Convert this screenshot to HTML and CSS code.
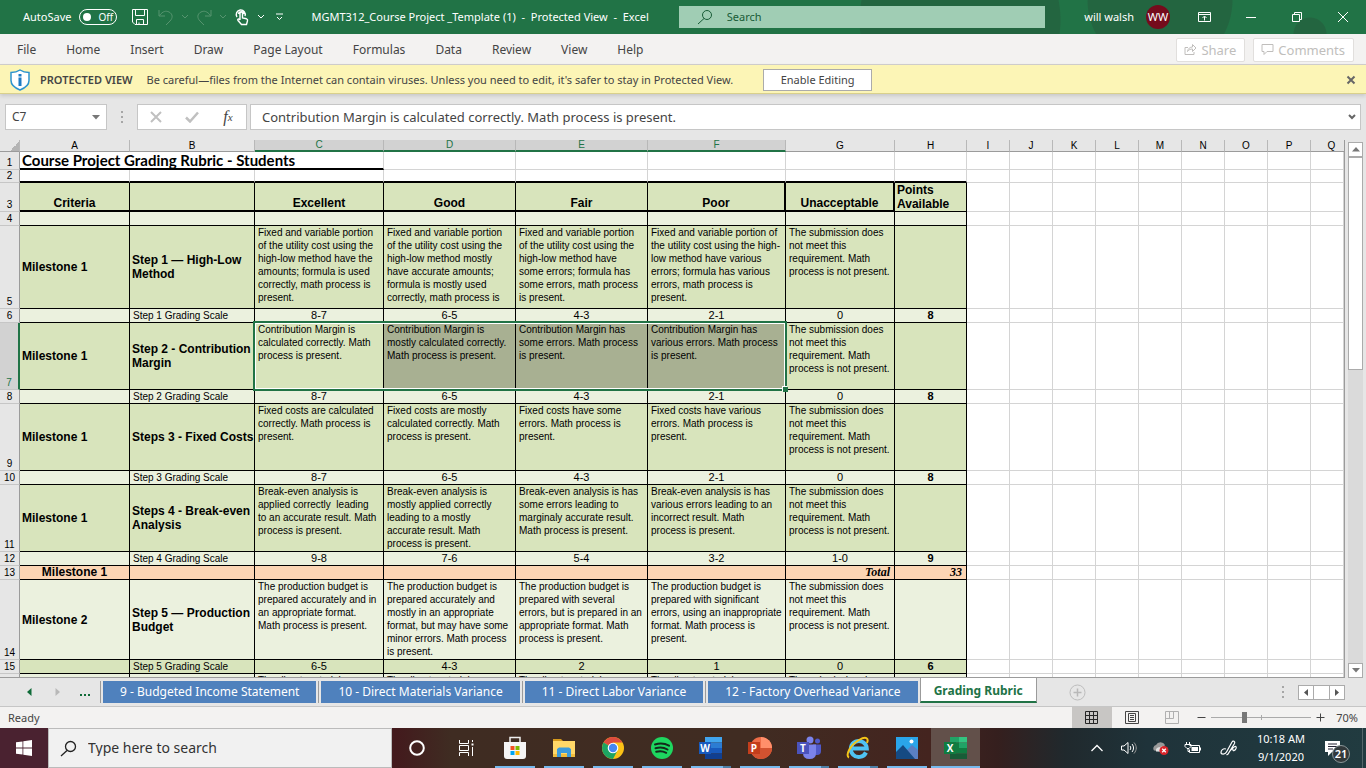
FILE: index.html
```html
<!DOCTYPE html>
<html lang="en">
<head>
  <meta charset="utf-8">
  <title>MGMT312_Course Project _Template (1) - Excel</title>
  <link rel="stylesheet" href="styles.css">
</head>
<body>
<header class="titlebar">
  <label class="autosave">AutoSave <input type="checkbox" class="switch"></label>
  <div class="qat">
    <button class="qat-btn" aria-label="Save"><svg width="18" height="18" viewBox="0 0 18 18"><path d="M1.5 1.5h15v15H4l-2.500-2.500zM4.500 1.500v6h9v-6M5.500 16.500v-5h7v5M8 16.500v-2" /></svg></button>
    <button class="qat-btn dim" aria-label="Undo"><svg width="18" height="18" viewBox="0 0 18 18"><path d="M2 2v6h6M2.500 7.500C6 3 9 2.500 12 4c4 2 4 6 1 9l-4 4" /></svg></button>
    <button class="caret dim" aria-label="Undo list"><svg width="8" height="6" viewBox="0 0 8 6"><path d="M1 1l3 3 3-3" /></svg></button>
    <button class="qat-btn dim" aria-label="Redo"><svg width="18" height="18" viewBox="0 0 18 18"><path d="M16 2v6h-6M15.500 7.500C12 3 9 2.500 6 4c-4 2-4 6-1 9l4 4" /></svg></button>
    <button class="caret dim" aria-label="Redo list"><svg width="8" height="6" viewBox="0 0 8 6"><path d="M1 1l3 3 3-3" /></svg></button>
    <button class="qat-btn" aria-label="Touch mode"><svg class="touch" width="16" height="18" viewBox="0 0 16 18"><path d="M3 9a4.500 4.500 0 1 1 8-1M6 12V5.500c0-2 2.500-2 2.500 0V10l4 .8c1 .3 1.300 1 1 2L12.500 16.500H7.500L4 12.500c-.8-1.200.6-2 1.500-1.200L6 12M4.500 6a2.800 2.800 0 0 1 5.500 0" /></svg></button>
    <button class="caret" aria-label="Touch mode list"><svg width="8" height="6" viewBox="0 0 8 6"><path d="M1 1l3 3 3-3" /></svg></button>
    <button class="qat-btn" aria-label="Customize toolbar"><svg width="10" height="8" viewBox="0 0 10 8"><path d="M1 1h7M2 4l2.500 2.500L7 4" /></svg></button>
  </div>
  <h1 class="doc-title">MGMT312_Course Project _Template (1)&nbsp; -&nbsp; Protected View&nbsp; -&nbsp; Excel</h1>
  <label class="search">
    <svg width="16" height="16" viewBox="0 0 16 16"><circle cx="10" cy="6" r="4.500" /><path d="M7 9.500L1 15" /></svg>
    <input type="text" placeholder="Search" aria-label="Search">
  </label>
  <div class="account">
    <span>will walsh</span>
    <span class="avatar">WW</span>
  </div>
  <div class="window-btns">
    <button aria-label="Ribbon display options"><svg width="14" height="12" viewBox="0 0 14 12"><path d="M.5 1.500h12v9H.5zM.5 3.500h12M6.500 9.500v-4M4.500 7l2-2 2 2" /></svg></button>
    <button aria-label="Minimize"><svg width="12" height="12" viewBox="0 0 12 12"><path d="M1 6.500h10" /></svg></button>
    <button aria-label="Restore"><svg width="12" height="12" viewBox="0 0 12 12"><path d="M1.500 3.500h7v7h-7zM3.500 3.500v-2h7v7h-2" /></svg></button>
    <button aria-label="Close"><svg width="12" height="12" viewBox="0 0 12 12"><path d="M1 1l10 10M11 1L1 11" /></svg></button>
  </div>
</header>

<nav class="ribbon">
  <a href="#">File</a>
  <a href="#">Home</a>
  <a href="#">Insert</a>
  <a href="#">Draw</a>
  <a href="#">Page Layout</a>
  <a href="#">Formulas</a>
  <a href="#">Data</a>
  <a href="#">Review</a>
  <a href="#">View</a>
  <a href="#">Help</a>
  <div class="ribbon-right">
    <button disabled><svg width="13" height="13" viewBox="0 0 13 13"><path d="M4 4.500H1v7h9V9M3.500 8.500c.5-3 2.500-4.500 5-4.500V1.500l3.500 3.500-3.500 3.500V6c-2 0-3.500.5-5 2.500z" /></svg>Share</button>
    <button disabled><svg width="13" height="13" viewBox="0 0 13 13"><path d="M1 1.500h11v7H6l-3 3v-3H1z" /></svg>Comments</button>
  </div>
</nav>

<div class="msgbar">
  <svg class="shield" width="20" height="22" viewBox="0 0 20 22"><path d="M10 1c3 2 6 2.500 9 2.500v8c0 5-4 7.500-9 9.500-5-2-9-4.500-9-9.500v-8C4 3.500 7 3 10 1z" fill="#fff" stroke="#2b93cf" stroke-width="1.500" /><path d="M8.500 5h3v2.500h-3zM8.500 8.500h3V17h-3z" fill="#1e7cc4" /></svg>
  <b>PROTECTED VIEW</b>
  <span class="msg">Be careful—files from the Internet can contain viruses. Unless you need to edit, it's safer to stay in Protected View.</span>
  <button class="enable">Enable Editing</button>
  <button class="msg-close" aria-label="Close message"><svg width="10" height="10" viewBox="0 0 10 10"><path d="M1.500 1.500l7 7M8.500 1.500l-7 7" /></svg></button>
</div>

<div class="formulabar">
  <div class="namebox">
    <input type="text" value="C7" aria-label="Name box">
    <button aria-label="Cell names"><svg width="8" height="5" viewBox="0 0 8 5"><path d="M0 0h8L4 4.500z" fill="#777" /></svg></button>
  </div>
  <span class="grip"></span>
  <div class="fx-btns">
    <button aria-label="Cancel"><svg width="12" height="12" viewBox="0 0 12 12"><path d="M1 1l10 10M11 1L1 11" stroke="#c0c0c0" stroke-width="2" fill="none" /></svg></button>
    <button aria-label="Enter"><svg width="14" height="12" viewBox="0 0 14 12"><path d="M1 6.500L5 10.500 13 1.500" stroke="#c0c0c0" stroke-width="2.500" fill="none" /></svg></button>
    <button class="fx" aria-label="Insert function"><i>f</i><small>x</small></button>
  </div>
  <div class="formula">
    <input type="text" value="Contribution Margin is calculated correctly. Math process is present." aria-label="Formula bar">
    <button aria-label="Expand"><svg width="8" height="6" viewBox="0 0 8 6"><path d="M1 1l3 3 3-3" stroke="#666" stroke-width="2" fill="none" /></svg></button>
  </div>
</div>

<main class="workbook">
  <div class="sheet">
    <table>
      <colgroup>
        <col class="c-num"><col class="c-a"><col class="c-b"><col class="c-c"><col class="c-d"><col class="c-d"><col class="c-f"><col class="c-g"><col class="c-h">
        <col class="c-std" span="8"><col>
      </colgroup>
      <thead>
        <tr>
          <th class="corner"></th><th>A</th><th>B</th><th class="on">C</th><th class="on">D</th><th class="on">E</th><th class="on">F</th><th>G</th><th>H</th>
          <th>I</th><th>J</th><th>K</th><th>L</th><th>M</th><th>N</th><th>O</th><th>P</th><th class="last">Q</th>
        </tr>
      </thead>
      <tbody>
        <tr class="h18">
          <th>1</th><td class="title" colspan="3">Course Project Grading Rubric - Students</td>
          <td></td><td></td><td></td><td></td><td></td><td></td><td></td><td></td><td></td><td></td><td></td><td></td><td></td><td></td>
        </tr>
        <tr class="h13 over">
          <th>2</th><td></td><td></td><td></td><td></td><td></td><td></td><td></td><td></td>
          <td></td><td></td><td></td><td></td><td></td><td></td><td></td><td></td><td></td>
        </tr>
        <tr class="h29 heads green">
          <th>3</th><td>Criteria</td><td></td><td>Excellent</td><td>Good</td><td>Fair</td><td class="thick">Poor</td><td class="thick">Unacceptable</td><td class="points">Points<br>Available</td>
          <td></td><td></td><td></td><td></td><td></td><td></td><td></td><td></td><td></td>
        </tr>
        <tr class="h14 pale">
          <th>4</th><td></td><td></td><td></td><td></td><td></td><td></td><td></td><td></td>
          <td></td><td></td><td></td><td></td><td></td><td></td><td></td><td></td><td></td>
        </tr>
        <tr class="h83 green step">
          <th>5</th><td>Milestone 1</td><td>Step 1 — High-Low<br>Method</td>
          <td>Fixed and variable portion<br>of the utility cost using the<br>high-low method have the<br>amounts; formula is used<br>correctly, math process is<br>present.</td>
          <td>Fixed and variable portion<br>of the utility cost using the<br>high-low method mostly<br>have accurate amounts;<br>formula is mostly used<br>correctly, math process is</td>
          <td>Fixed and variable portion<br>of the utility cost using the<br>high-low method have<br>some errors; formula has<br>some errors, math process<br>is present.</td>
          <td>Fixed and variable portion of<br>the utility cost using the high-<br>low method have various<br>errors; formula has various<br>errors, math process is<br>present.</td>
          <td>The submission does<br>not meet this<br>requirement. Math<br>process is not present.</td>
          <td></td>
          <td></td><td></td><td></td><td></td><td></td><td></td><td></td><td></td><td></td>
        </tr>
        <tr class="h14 pale scale">
          <th>6</th><td></td><td>Step 1 Grading Scale</td><td>8-7</td><td>6-5</td><td>4-3</td><td>2-1</td><td>0</td><td>8</td>
          <td></td><td></td><td></td><td></td><td></td><td></td><td></td><td></td><td></td>
        </tr>
        <tr class="h67 green step">
          <th class="on">7</th><td>Milestone 1</td><td>Step 2 - Contribution<br>Margin</td>
          <td class="active">Contribution Margin is<br>calculated correctly. Math<br>process is present.<div class="selection"></div></td>
          <td class="picked">Contribution Margin is<br>mostly calculated correctly.<br>Math process is present.</td>
          <td class="picked">Contribution Margin has<br>some errors. Math process<br>is present.</td>
          <td class="picked">Contribution Margin has<br>various errors. Math process<br>is present.</td>
          <td>The submission does<br>not meet this<br>requirement. Math<br>process is not present.</td>
          <td></td>
          <td></td><td></td><td></td><td></td><td></td><td></td><td></td><td></td><td></td>
        </tr>
        <tr class="h14 pale scale">
          <th>8</th><td></td><td>Step 2 Grading Scale</td><td>8-7</td><td>6-5</td><td>4-3</td><td>2-1</td><td>0</td><td>8</td>
          <td></td><td></td><td></td><td></td><td></td><td></td><td></td><td></td><td></td>
        </tr>
        <tr class="h67 green step">
          <th>9</th><td>Milestone 1</td><td>Steps 3 - Fixed Costs</td>
          <td>Fixed costs are calculated<br>correctly. Math process is<br>present.</td>
          <td>Fixed costs are mostly<br>calculated correctly. Math<br>process is present.</td>
          <td>Fixed costs have some<br>errors. Math process is<br>present.</td>
          <td>Fixed costs have various<br>errors. Math process is<br>present.</td>
          <td>The submission does<br>not meet this<br>requirement. Math<br>process is not present.</td>
          <td></td>
          <td></td><td></td><td></td><td></td><td></td><td></td><td></td><td></td><td></td>
        </tr>
        <tr class="h14 pale scale">
          <th>10</th><td></td><td>Step 3 Grading Scale</td><td>8-7</td><td>6-5</td><td>4-3</td><td>2-1</td><td>0</td><td>8</td>
          <td></td><td></td><td></td><td></td><td></td><td></td><td></td><td></td><td></td>
        </tr>
        <tr class="h67 green step">
          <th>11</th><td>Milestone 1</td><td>Steps 4 - Break-even<br>Analysis</td>
          <td>Break-even analysis is<br>applied correctly&nbsp; leading<br>to an accurate result. Math<br>process is present.</td>
          <td>Break-even analysis is<br>mostly applied correctly<br>leading to a mostly<br>accurate result. Math<br>process is present.</td>
          <td>Break-even analysis is has<br>some errors leading to<br>marginaly accurate result.<br>Math process is present.</td>
          <td>Break-even analysis is has<br>various errors leading to an<br>incorrect result. Math<br>process is present.</td>
          <td>The submission does<br>not meet this<br>requirement. Math<br>process is not present.</td>
          <td></td>
          <td></td><td></td><td></td><td></td><td></td><td></td><td></td><td></td><td></td>
        </tr>
        <tr class="h14 pale scale">
          <th>12</th><td></td><td>Step 4 Grading Scale</td><td>9-8</td><td>7-6</td><td>5-4</td><td>3-2</td><td>1-0</td><td>9</td>
          <td></td><td></td><td></td><td></td><td></td><td></td><td></td><td></td><td></td>
        </tr>
        <tr class="h14 total">
          <th>13</th><td>Milestone 1</td><td></td><td></td><td></td><td></td><td></td><td class="sum">Total</td><td class="sum">33</td>
          <td></td><td></td><td></td><td></td><td></td><td></td><td></td><td></td><td></td>
        </tr>
        <tr class="h80 pale step">
          <th>14</th><td>Milestone 2</td><td>Step 5 — Production<br>Budget</td>
          <td>The production budget is<br>prepared accurately and in<br>an appropriate format.<br>Math process is present.</td>
          <td>The production budget is<br>prepared accurately and<br>mostly in an appropriate<br>format, but may have some<br>minor errors. Math process<br>is present.</td>
          <td>The production budget is<br>prepared with several<br>errors, but is prepared in an<br>appropriate format. Math<br>process is present.</td>
          <td>The production budget is<br>prepared with significant<br>errors, using an inappropriate<br>format. Math process is<br>present.</td>
          <td>The submission does<br>not meet this<br>requirement. Math<br>process is not present.</td>
          <td></td>
          <td></td><td></td><td></td><td></td><td></td><td></td><td></td><td></td><td></td>
        </tr>
        <tr class="h14 green scale">
          <th>15</th><td></td><td>Step 5 Grading Scale</td><td>6-5</td><td>4-3</td><td>2</td><td>1</td><td>0</td><td>6</td>
          <td></td><td></td><td></td><td></td><td></td><td></td><td></td><td></td><td></td>
        </tr>
        <tr class="h67 pale step">
          <th></th><td></td><td></td><td>The direct material</td><td>The direct material</td><td>The direct material</td><td>The direct material</td><td>The submission does</td><td></td>
          <td></td><td></td><td></td><td></td><td></td><td></td><td></td><td></td><td></td>
        </tr>
      </tbody>
    </table>
  </div>
  <div class="vscroll">
    <button aria-label="Scroll up"><svg width="8" height="5" viewBox="0 0 8 5"><path d="M0 4.500h8L4 0z" fill="#777" /></svg></button>
    <div class="vtrack"><div class="vthumb"></div></div>
    <button aria-label="Scroll down"><svg width="8" height="5" viewBox="0 0 8 5"><path d="M0 0h8L4 4.500z" fill="#777" /></svg></button>
  </div>
</main>

<div class="tabbar">
  <div class="tab-nav">
    <button aria-label="Previous sheet"><svg width="5" height="8" viewBox="0 0 5 8"><path d="M4.500 0v8L0 4z" fill="#0f6b38" /></svg></button>
    <button aria-label="Next sheet"><svg width="5" height="8" viewBox="0 0 5 8"><path d="M.5 0v8L5 4z" fill="#b8b8b8" /></svg></button>
    <button class="more" aria-label="More sheets"><svg width="12" height="12" viewBox="0 0 12 12"><path d="M1 8h2v2H1zM5 8h2v2H5zM9 8h2v2H9z" fill="#0f6b38" /></svg></button>
  </div>
  <button class="tab">9 - Budgeted Income Statement</button>
  <button class="tab">10 - Direct Materials Variance</button>
  <button class="tab">11 - Direct Labor Variance</button>
  <button class="tab">12 - Factory Overhead Variance</button>
  <button class="tab current">Grading Rubric</button>
  <button class="add-sheet" aria-label="New sheet"><svg width="17" height="17" viewBox="0 0 17 17"><path d="M8.500 4.500v8M4.500 8.500h8" stroke="#b8b8b8" stroke-width="1.500" /><circle cx="8.500" cy="8.500" r="7.500" fill="none" stroke="#bdbdbd" /></svg></button>
  <span class="grip"></span>
  <div class="hscroll">
    <button aria-label="Scroll left"><svg width="4" height="7" viewBox="0 0 4 7"><path d="M4 0v7L0 3.500z" fill="#555" /></svg></button>
    <div></div>
    <button aria-label="Scroll right"><svg width="4" height="7" viewBox="0 0 4 7"><path d="M0 0v7l4-3.500z" fill="#555" /></svg></button>
  </div>
</div>

<div class="statusbar">
  <span class="ready">Ready</span>
  <button class="view on" aria-label="Normal"><svg width="14" height="14" viewBox="0 0 14 14"><path d="M.5.5h12v12H.5zM4.500.5v12M8.500.5v12M.5 4.500h12M.5 8.500h12" stroke="#262626" fill="none" /></svg></button>
  <button class="view" aria-label="Page layout"><svg width="14" height="14" viewBox="0 0 14 14"><path d="M.5.5h13v12H.5zM3.500 2.500h7v8h-7zM5 4.500h4M5 6.500h4M5 8.500h4" stroke="#444" fill="none" /></svg></button>
  <button class="view" aria-label="Page break preview"><svg width="14" height="14" viewBox="0 0 14 14"><path d="M.5.5h13v12H.5zM.5 7.500h8v-7M4.500.5v7" stroke="#b0b0b0" fill="none" /></svg></button>
  <button class="zoom-btn" aria-label="Zoom out"><svg width="9" height="9" viewBox="0 0 9 9"><path d="M.5 4.500h8" stroke="#444" /></svg></button>
  <input type="range" class="zoom" min="0" max="100" value="33" aria-label="Zoom">
  <button class="zoom-btn" aria-label="Zoom in"><svg width="9" height="9" viewBox="0 0 9 9"><path d="M.5 4.500h8M4.500.5v8" stroke="#444" /></svg></button>
  <span class="zoom-value">70%</span>
</div>

<footer class="taskbar">
  <button class="start" aria-label="Start"><svg width="16" height="16" viewBox="0 0 16 16"><path d="M0 2.300L6.500 1.400v6.200H0zM7.300 1.300L16 0v7.600H7.300zM0 8.400h6.500v6.200L0 13.700zM7.300 8.400H16V16l-8.700-1.300z" fill="#fff" /></svg></button>
  <label class="task-search">
    <svg width="17" height="17" viewBox="0 0 17 17"><circle cx="10.500" cy="6.500" r="5" fill="none" stroke="#222" stroke-width="1.300" /><path d="M7 10.500L1 16" stroke="#222" stroke-width="1.300" /></svg>
    <input type="text" placeholder="Type here to search" aria-label="Type here to search">
  </label>
  <div class="apps">
    <button class="app" aria-label="Cortana"><svg width="18" height="18" viewBox="0 0 18 18"><circle cx="9" cy="9" r="6.800" fill="none" stroke="#fff" stroke-width="2" /></svg></button>
    <button class="app" aria-label="Task view"><svg width="18" height="18" viewBox="0 0 18 18"><path d="M2.500 1v3.500h9V1M2.500 17v-3.500h9V17M2.500 6.500h9v5h-9zM15.500 1v2M15.500 8v9" stroke="#fff" fill="none" /><path d="M14.500 4.500h2v2h-2z" fill="#fff" /></svg></button>
    <button class="app open" aria-label="Store"><svg width="24" height="24" viewBox="0 0 24 24"><path d="M7 8V1.500h10V8" fill="none" stroke="#eee" stroke-width="1.500" /><path d="M1 6h22v14q0 3-3 3H4q-3 0-3-3z" fill="#f5f5f5" /><path d="M7.500 10h4v4h-4z" fill="#f25022" /><path d="M12.500 10h4v4h-4z" fill="#7fba00" /><path d="M7.500 15h4v4h-4z" fill="#00a4ef" /><path d="M12.500 15h4v4h-4z" fill="#ffb900" /></svg></button>
    <button class="app open" aria-label="File Explorer"><svg width="24" height="24" viewBox="0 0 24 24"><path d="M1 3h8l2 2H1z" fill="#d69a1c" /><path d="M1 5h22v16H1z" fill="#ffd869" /><path d="M1 18h22v3H1z" fill="#f0bd3e" /><path d="M5 21v-8l2-1.500h10l2 1.500v8h-4v-4H9v4z" fill="#3c9bdc" /></svg></button>
    <button class="app open" aria-label="Chrome"><svg width="24" height="24" viewBox="0 0 24 24"><circle cx="12" cy="12" r="11" fill="#fbc116" /><path d="M12 12L2.500 6.500A11 11 0 0 1 21.500 6.500H12z" fill="#dd4b3e" /><path d="M2.500 6.500A11 11 0 0 0 12 23l4.500-8.500L12 12z" fill="#1da462" /><circle cx="12" cy="12" r="5.300" fill="#fff" /><circle cx="12" cy="12" r="4.200" fill="#4587f3" /></svg></button>
    <button class="app open" aria-label="Spotify"><svg width="24" height="24" viewBox="0 0 24 24"><circle cx="12" cy="12" r="11" fill="#1ed760" /><path d="M5 8.500c5-1.500 10-1 14 1.200M5.500 12.300c4.300-1.200 8.500-.8 12 1.200M6.200 15.800c3.700-1 7-.6 10 1" fill="none" stroke="#132b1b" stroke-width="2" stroke-linecap="round" /></svg></button>
    <button class="app open stack" aria-label="Word"><svg width="24" height="24" viewBox="0 0 24 24"><path d="M6 1h17v5.500H6z" fill="#41a5ee" /><path d="M6 6.500h17V12H6z" fill="#2b7cd3" /><path d="M6 12h17v5.500H6z" fill="#185abd" /><path d="M6 17.500h17V23H6z" fill="#103f91" /><path d="M0 6h12v12H0z" fill="#185abd" /><text x="6" y="15.500" class="letter">W</text></svg></button>
    <button class="app open" aria-label="PowerPoint"><svg width="24" height="24" viewBox="0 0 24 24"><circle cx="13" cy="12" r="11" fill="#ed6c47" /><path d="M13 1a11 11 0 0 1 11 11H13z" fill="#ff8f6b" /><path d="M2 12h22a11 11 0 0 1-22 0z" fill="#d35230" /><path d="M0 6h12v12H0z" fill="#c43e1c" /><text x="6" y="15.500" class="letter">P</text></svg></button>
    <button class="app open stack" aria-label="Teams"><svg width="24" height="24" viewBox="0 0 24 24"><circle cx="13" cy="4" r="3.500" fill="#7b83eb" /><circle cx="20.500" cy="5" r="2.500" fill="#5059c9" /><path d="M16 8.500h8V15q0 4-4 4h-4z" fill="#5059c9" /><path d="M6 8.500h13V17q0 6-6.500 6T6 17z" fill="#7b83eb" /><path d="M0 6h12v12H0z" fill="#4b53bc" /><text x="6" y="15.500" class="letter">T</text></svg></button>
    <button class="app open stack" aria-label="Internet Explorer"><svg width="24" height="24" viewBox="0 0 24 24"><path d="M20 16.500a8 8 0 1 1 .8-4H7" fill="none" stroke="#4fc3f3" stroke-width="4" /><path d="M3 21.500C-1 20 4 9 13 4c7-4 10-2 8 3" fill="none" stroke="#f5c518" stroke-width="2" /></svg></button>
    <button class="app open" aria-label="Photos"><svg width="24" height="24" viewBox="0 0 24 24"><path d="M1 1h22v22H1z" fill="#2aa5ea" /><path d="M11 15l6-6 6 5v9h-9z" fill="#5b7fc2" /><path d="M1 16l7-7 12 14H1z" fill="#154a83" /><circle cx="16.500" cy="5.500" r="2" fill="#fff" /></svg></button>
    <button class="app open focus" aria-label="Excel"><svg width="24" height="24" viewBox="0 0 24 24"><path d="M6 1h9v5.500H6z" fill="#21a366" /><path d="M15 1h8v5.500h-8z" fill="#33c481" /><path d="M6 6.500h9V12H6z" fill="#107c41" /><path d="M15 6.500h8V12h-8z" fill="#21a366" /><path d="M6 12h17v5.500H6z" fill="#107c41" /><path d="M6 17.500h17V23H6z" fill="#185c37" /><path d="M0 6h12v12H0z" fill="#107c41" /><text x="6" y="15.500" class="letter">X</text></svg></button>
  </div>
  <div class="tray">
    <button aria-label="Hidden icons"><svg width="14" height="14" viewBox="0 0 14 14"><path d="M1.500 10L7 4.500l5.500 5.500" stroke="#fff" stroke-width="1.300" fill="none" /></svg></button>
    <button aria-label="Volume"><svg width="18" height="14" viewBox="0 0 18 14"><path d="M1.500 5v4H4l4 3.500v-11L4 5zM10 5c1 1.200 1 2.800 0 4M12 3c2 2.500 2 5.500 0 8" stroke="#fff" fill="none" /><path d="M14 1.500c3 3.500 3 7.500 0 11" stroke="#999" fill="none" /></svg></button>
    <button aria-label="OneDrive"><svg width="18" height="14" viewBox="0 0 18 14"><path d="M2 9.500a3.500 3.500 0 0 1 2-5.500 5 5 0 0 1 9 0l-4 6z" fill="#999" /><path d="M4 10.500q-1-4 4-4.500 5-2 7 2v3z" fill="#e0e0e0" /><circle cx="12" cy="9.500" r="4.500" fill="#d9252b" /><path d="M10.200 7.700l3.600 3.600M13.800 7.700l-3.600 3.600" stroke="#fff" stroke-width="1.300" /></svg></button>
    <button aria-label="Battery"><svg width="18" height="14" viewBox="0 0 18 14"><path d="M5.500 4.500h10v7h-10v-3M16.500 6.500v3" stroke="#fff" fill="none" /><path d="M7.500 6h6.500v4H7.500z" fill="#fff" /><path d="M2.500 1v3M5.500 1v3M1 3.500h6v2L5 7.500H3L1 5.500zM4 7v3.500h2" stroke="#fff" fill="none" /></svg></button>
    <button class="pen" aria-label="Windows Ink"><svg width="18" height="16" viewBox="0 0 18 16"><path d="M6 9c-3-1-5 1.500-5 3.500S5 15 6.500 12L12 2c1-2 3.500-.5 2.500 1.500L8 14l-1.500 1M10 11c4-5 7-6 6-2.500-.7 2-3 3-3 1.500s-1-2-1-2" stroke="#fff" stroke-width="1.200" fill="none" /></svg></button>
    <div class="clock">10:18 AM<br>9/1/2020</div>
    <button class="notify" aria-label="Notifications"><svg width="18" height="17" viewBox="0 0 18 17"><path d="M1 1h15v11H8l-4 4v-4H1z" fill="#fff" /><path d="M4 4h9M4 6.500h9M4 9h5" stroke="#223" /></svg><span class="badge">21</span></button>
  </div>
</footer>
</body>
</html>
```
FILE: styles.css
```css
* {
  box-sizing: border-box;
}
html,
body {
  height: 100%;
}
body {
  margin: 0;
  display: flex;
  flex-direction: column;
  overflow: hidden;
  background: #e6e6e6;
  color: #444;
  font: 12px/16px "Noto Sans", "Open Sans", sans-serif;
}
button,
input {
  margin: 0;
  padding: 0;
  border: 0;
  background: none;
  color: inherit;
  font: inherit;
}
button {
  display: flex;
  align-items: center;
  justify-content: center;
}
svg {
  display: block;
  flex: none;
}

/* title bar */
.titlebar {
  display: flex;
  align-items: center;
  flex: none;
  height: 34px;
  padding-left: 23px;
  background:
    radial-gradient(circle at 1310px 34px, #236540 16px, transparent 17px),
    radial-gradient(circle at 1290px 20px, #217346 34px, transparent 35px),
    radial-gradient(circle at 1160px 0, #236540 72px, transparent 73px),
    radial-gradient(circle at 960px 20px, #236540 100px, transparent 101px),
    #217346;
  color: #fff;
  font-size: 11px;
}
.titlebar svg {
  fill: none;
  stroke: currentColor;
}
.titlebar .touch {
  stroke-width: 1.4;
}
.autosave {
  display: flex;
  align-items: center;
  gap: 8px;
}
.switch {
  appearance: none;
  display: flex;
  align-items: center;
  width: 38px;
  height: 16px;
  border: 1px solid #fff;
  border-radius: 8px;
}
.switch::before {
  content: "";
  width: 8px;
  height: 8px;
  margin: 0 7px 0 3px;
  border-radius: 50%;
  background: #fff;
}
.switch::after {
  content: "Off";
  font-size: 10px;
}
.qat {
  display: flex;
  align-items: center;
  padding-left: 10px;
}
.qat-btn {
  width: 26px;
  height: 30px;
}
.caret {
  width: 12px;
  height: 30px;
}
.dim {
  color: #56946f;
}
.doc-title {
  margin: 0 30px 0 18px;
  font-size: 11px;
  font-weight: 400;
  white-space: nowrap;
}
.search {
  display: flex;
  align-items: center;
  flex: 0 1 366px;
  gap: 14px;
  height: 22px;
  padding-left: 18px;
  background: #a0cdb4;
  color: #185c37;
}
.search input {
  min-width: 0;
}
.search input::placeholder {
  color: #185c37;
}
.account {
  display: flex;
  align-items: center;
  gap: 12px;
  margin-left: auto;
}
.avatar {
  width: 24px;
  height: 24px;
  border-radius: 50%;
  background: #750b1c;
  line-height: 24px;
  text-align: center;
}
.window-btns {
  display: flex;
  margin-left: 12px;
}
.window-btns button {
  width: 46px;
  height: 32px;
}

/* ribbon tabs */
.ribbon {
  display: flex;
  align-items: center;
  flex: none;
  gap: 30px;
  height: 31px;
  padding: 1px 12px 0 17px;
  border-bottom: 1px solid #cfcdcb;
  background: #f3f2f1;
}
.ribbon a {
  color: #444;
  text-decoration: none;
}
.ribbon-right {
  display: flex;
  gap: 8px;
  margin-left: auto;
}
.ribbon-right button {
  gap: 4px;
  height: 24px;
  padding: 0 8px 0 7px;
  border: 1px solid #e1dfdd;
  border-radius: 2px;
  background: #fff;
  color: #c0bebc;
  font-size: 13px;
}
.ribbon-right svg {
  fill: none;
  stroke: currentColor;
}

/* protected view bar */
.msgbar {
  display: flex;
  align-items: center;
  flex: none;
  gap: 10px;
  height: 29px;
  padding: 1px 10px 0;
  border-bottom: 1px solid #d9d08c;
  background: #fcf5b6;
  box-shadow: 0 2px 4px #c8c8c8;
  font-size: 11px;
}
.msgbar b {
  font-weight: 600;
}
.msg {
  padding: 0 10px 0 4px;
}
.enable {
  width: 109px;
  height: 22px;
  margin-left: 10px;
  border: 1px solid #ababab;
  background: #fff;
}
.msg-close {
  margin-left: auto;
}
.msg-close svg {
  stroke: #666;
  stroke-width: 2;
}

/* formula bar */
.formulabar {
  display: flex;
  align-items: center;
  flex: none;
  height: 46px;
  padding: 0 5px;
}
.namebox,
.fx-btns,
.formula {
  display: flex;
  height: 26px;
  border: 1px solid #c6c6c6;
  background: #fff;
}
.namebox {
  width: 102px;
}
.namebox input {
  flex: 1;
  min-width: 0;
  padding-left: 6px;
}
.namebox button {
  width: 20px;
}
.grip {
  width: 2px;
  height: 12px;
  margin: 0 14px;
  background: repeating-linear-gradient(#a6a6a6 0 2px, transparent 2px 5px);
}
.fx-btns {
  width: 110px;
}
.fx-btns button {
  flex: 1;
}
.fx {
  font-family: "Liberation Serif", serif;
  font-size: 16px;
}
.fx small {
  font-size: 11px;
  font-style: italic;
}
.formula {
  flex: 1;
  margin-left: 3px;
}
.formula input {
  flex: 1;
  padding-left: 11px;
  font-size: 13px;
}
.formula button {
  width: 16px;
}

/* sheet */
.workbook {
  display: flex;
  flex: 1;
  min-height: 0;
}
.sheet {
  flex: 1;
  min-width: 0;
  overflow: hidden;
  border-right: 1px solid #9b9b9b;
  border-bottom: 1px solid #9b9b9b;
}
.sheet table {
  width: 100%;
  table-layout: fixed;
  border-collapse: separate;
  border-spacing: 0;
  background: #fff;
  color: #000;
  font: 10px/13px "Liberation Sans", Arial, sans-serif;
}
.c-num { width: 20px; }
.c-a { width: 110px; }
.c-b { width: 125px; }
.c-c { width: 129px; }
.c-d { width: 132px; }
.c-f { width: 138px; }
.c-g { width: 109px; }
.c-h { width: 72px; }
.c-std { width: 43px; }

.sheet th,
.sheet td {
  padding: 0;
  white-space: nowrap;
}
.sheet th {
  border-right: 1px solid #9b9b9b;
  border-bottom: 1px solid #c6c6c6;
  background: #e6e6e6;
  font-weight: 400;
  vertical-align: bottom;
}
.sheet thead th {
  height: 12px;
  border-right-color: #b8b8b8;
  border-bottom-color: #9b9b9b;
  line-height: 10px;
}
.sheet tbody th {
  line-height: 12px;
}
.sheet thead .last {
  padding-left: 8px;
  border-right: 0;
}
.sheet thead .on {
  border-bottom: 2px solid #217346;
  background: #d2d2d2;
  color: #217346;
}
.sheet tbody .on {
  border-right: 2px solid #217346;
  background: #d2d2d2;
  color: #217346;
}
.sheet .corner {
  background: linear-gradient(135deg, #e6e6e6 70%, #b4b4b4 70%);
}
.sheet td {
  border-right: 1px solid #d4d4d4;
  border-bottom: 1px solid #d4d4d4;
}

.h13 { height: 13px; }
.h14 { height: 14px; }
.h18 { height: 18px; }
.h29 { height: 29px; }
.h67 { height: 67px; }
.h80 { height: 80px; }
.h83 { height: 83px; }

.sheet .title {
  padding-left: 2px;
  border-bottom: 2px solid #000;
  font: 700 15px/16px Lato, "Liberation Sans", sans-serif;
}
.over td:nth-child(-n+9) {
  border-bottom: 2px solid #000;
}
.over th,
.over td {
  line-height: 11px;
}

/* the rubric itself sits in columns A to H */
.green td:nth-child(-n+9) {
  border-color: #000;
  background: #d8e4bc;
}
.pale td:nth-child(-n+9) {
  border-color: #000;
  background: #ebf1de;
}
.total td:nth-child(-n+9) {
  border-color: #000;
  background: #fcd5b4;
}
.heads td {
  font-size: 12px;
  font-weight: 700;
  text-align: center;
  vertical-align: bottom;
}
.heads td:nth-child(-n+8) {
  border-bottom-width: 2px;
}
.heads .thick {
  border-right-width: 2px;
}
.heads .points {
  padding-left: 2px;
  line-height: 14px;
  text-align: left;
}
.step td {
  padding-left: 3px;
  vertical-align: top;
}
.step td:nth-child(-n+3) {
  padding-left: 2px;
  font-size: 12px;
  font-weight: 700;
  line-height: 14px;
  vertical-align: middle;
}
.scale td {
  font-size: 11px;
  text-align: center;
}
.scale td:nth-child(3) {
  padding-left: 3px;
  font-size: 10px;
  text-align: left;
}
.scale td:nth-child(9) {
  font-weight: 700;
}
.total td {
  font-size: 12px;
  font-weight: 700;
  text-align: center;
}
.total .sum {
  padding-right: 4px;
  font-family: "Liberation Serif", serif;
  font-style: italic;
  text-align: right;
}
.step .picked:nth-child(-n+9) {
  background: #a8b092;
}
.active {
  position: relative;
}
.selection {
  position: absolute;
  z-index: 1;
  top: -2px;
  left: -2px;
  width: 534px;
  height: 70px;
  border: 2px solid #217346;
  box-shadow: inset 0 0 0 1px #fff;
}
.selection::after {
  content: "";
  position: absolute;
  right: -3px;
  bottom: -3px;
  width: 5px;
  height: 5px;
  background: #217346;
  box-shadow: -1px -1px 0 #fff;
}

.vscroll {
  display: flex;
  flex-direction: column;
  flex: none;
  width: 15px;
  margin: 2px 3px 0;
}
.vscroll button,
.vthumb {
  flex: none;
  height: 15px;
  border: 1px solid #ababab;
  background: #fff;
}
.vtrack {
  flex: 1;
  background: #dadada;
}
.vtrack .vthumb {
  height: 42%;
}

/* sheet tabs */
.tabbar {
  display: flex;
  align-items: center;
  flex: none;
  height: 28px;
  padding-right: 21px;
}
.tab-nav {
  display: flex;
  width: 103px;
  padding-left: 15px;
}
.tab-nav button {
  width: 28px;
  height: 22px;
}
.tab {
  height: 22px;
  margin-right: 2px;
  padding: 0 17px;
  border: 0 solid #9b9b9b;
  background: #4f81bd;
  color: #fff;
  white-space: nowrap;
  box-shadow: -2px 0 0 #e6e6e6, -3px 0 0 #9b9b9b;
}
.tab + .tab {
  margin-left: 3px;
}
.tab + .current {
  align-self: flex-start;
  height: 25px;
  margin: 0 32px 0 0;
  padding: 2px 13px 0;
  border-width: 0 1px 0 1px;
  border-bottom: 2px solid #217346;
  background: #fff;
  color: #217346;
  font-weight: 700;
  box-shadow: none;
}
.tabbar .grip {
  height: 12px;
  margin-left: auto;
}
.hscroll {
  display: flex;
  border: 1px solid #ababab;
  background: #fff;
}
.hscroll > * {
  width: 14px;
  height: 13px;
}
.hscroll div {
  width: 17px;
  border: 1px solid #ababab;
  border-width: 0 1px;
}

/* status bar */
.statusbar {
  display: flex;
  align-items: center;
  flex: none;
  height: 22px;
  padding: 0 8px;
  border-top: 1px solid #c6c6c6;
  background: #f3f2f1;
  font-size: 11px;
}
.ready {
  margin-right: auto;
}
.view {
  width: 40px;
  height: 21px;
}
.view.on {
  background: #c8c6c4;
}
.zoom-btn {
  width: 19px;
  height: 20px;
}
.zoom {
  appearance: none;
  width: 100px;
  height: 16px;
  background:
    linear-gradient(#aaa, #aaa) 50% 50% / 1px 5px no-repeat,
    linear-gradient(#aaa, #aaa) 0 50% / 100% 1px no-repeat;
}
.zoom::-webkit-slider-thumb {
  appearance: none;
  width: 5px;
  height: 11px;
  background: #777;
}
.zoom-value {
  width: 28px;
  text-align: right;
}

/* taskbar */
.taskbar {
  display: flex;
  flex: none;
  height: 40px;
  background: linear-gradient(90deg, #4a2230 0, #4a2230 4%, #431a1d 29%, #3f2c22 33%, #402c22 55%, #44241f 68%, #351f1e 73%, #20292d 78%, #1f333a 84%, #213b40 100%);
  color: #fff;
}
.start {
  width: 48px;
}
.task-search {
  display: flex;
  align-items: center;
  gap: 11px;
  width: 344px;
  padding-left: 11px;
  border: 1px solid #bbb;
  background: #f1f1f1;
  color: #333;
  font-size: 14px;
}
.task-search input::placeholder {
  color: #333;
}
.apps {
  display: flex;
}
.app {
  width: 49px;
  height: 40px;
}
.open {
  background: linear-gradient(#76b9ed, #76b9ed) 50% 100% / 40px 2px no-repeat;
}
.stack {
  background:
    linear-gradient(#4d7fa6, #4d7fa6) 37px 100% / 8px 2px no-repeat,
    linear-gradient(#76b9ed, #76b9ed) 50% 100% / 40px 2px no-repeat;
}
.focus {
  background:
    linear-gradient(#76b9ed, #76b9ed) 0 100% / 100% 2px no-repeat,
    #62504a;
}
.letter {
  fill: #fff;
  font: 700 10px "Open Sans", sans-serif;
  text-anchor: middle;
}
.tray {
  display: flex;
  margin-left: auto;
  padding-right: 3px;
}
.tray button {
  width: 32px;
  height: 40px;
}
.tray .pen {
  width: 40px;
}
.clock {
  width: 64px;
  padding-top: 2px;
  font-size: 11px;
  line-height: 18px;
  text-align: center;
}
.tray .notify {
  position: relative;
  width: 50px;
  padding-right: 10px;
  border-right: 1px solid #54666a;
}
.badge {
  position: absolute;
  right: 12px;
  bottom: 5px;
  width: 18px;
  height: 18px;
  border: 1px solid #8a9698;
  border-radius: 50%;
  background: #32393b;
  font-size: 11px;
  font-weight: 600;
  line-height: 16px;
}
```
